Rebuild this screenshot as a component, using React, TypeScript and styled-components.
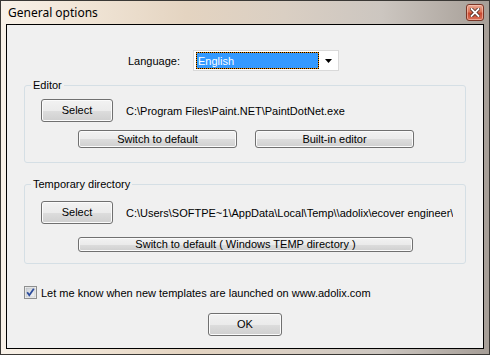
import React from "react";
import styled, { createGlobalStyle } from "styled-components";

const GlobalStyle = createGlobalStyle`
  html, body {
    margin: 0;
    padding: 0;
    background: #ffffff;
  }
  body {
    font-family: "Liberation Sans", Arial, sans-serif;
  }
`;

const Window = styled.div`
  box-sizing: border-box;
  width: 490px;
  height: 355px;
  border: 1px solid #3a3835;
  background: linear-gradient(to right, #f8f1e8 0%, #f0e4d5 18%, #e4d4c1 38%, #dacfc3 58%, #ccc6c0 78%, #a69e97 100%);
  padding: 0 5px 5px 5px;
  display: flex;
  flex-direction: column;
`;

const TitleBar = styled.div`
  height: 23px;
  display: flex;
  justify-content: space-between;
  align-items: flex-start;
`;

const Title = styled.span`
  padding: 4px 0 0 2px;
  font-family: "Noto Sans", "Open Sans", sans-serif;
  font-size: 12px;
  line-height: 16px;
  color: #000;
`;

const CloseButton = styled.div`
  box-sizing: border-box;
  width: 18px;
  height: 17px;
  margin: 3px 0 0 0;
  border: 1px solid #7a3526;
  border-radius: 3px;
  background: linear-gradient(to bottom, #eaa892 0%, #dc7458 45%, #c8472f 55%, #d9725a 100%);
  box-shadow: inset 0 0 0 1px rgba(255, 210, 195, 0.55);
  display: flex;
  align-items: center;
  justify-content: center;
`;

const Client = styled.div`
  flex: 1;
  border: 1px solid #000;
  background: #f0f0f0;
  display: flex;
  flex-direction: column;
  font-size: 11px;
  color: #000;
`;

const LanguageRow = styled.div`
  margin-top: 25px;
  padding-left: 121px;
  height: 21px;
  display: flex;
  align-items: center;
  gap: 13px;
`;

const Combo = styled.div`
  box-sizing: border-box;
  width: 146px;
  height: 21px;
  border: 1px solid #d9d9d9;
  background: #fff;
  padding: 1px 1px 1px 2px;
  display: flex;
  align-items: stretch;
`;

const ComboValue = styled.div`
  flex: 1;
  border: 1px dotted #000;
  background: linear-gradient(#3399ff, #3399ff) padding-box, #f08c00 border-box;
  color: #fff;
  line-height: 16px;
  padding-left: 1px;
`;

const ComboArrow = styled.div`
  width: 18px;
  display: flex;
  align-items: center;
  justify-content: center;
`;

const GroupBox = styled.div<{ $top: number; $bottom: number }>`
  margin: ${(p) => p.$top}px 17px 0 17px;
  padding-bottom: ${(p) => p.$bottom}px;
  border: 1px solid #d5dfe5;
  border-radius: 3px;
  display: flex;
  flex-direction: column;
`;

const Legend = styled.span`
  align-self: flex-start;
  margin: -7px 0 0 6px;
  padding: 0 2px;
  line-height: 13px;
  background: #f0f0f0;
`;

const Row = styled.div<{ $top: number; $left: number; $gap: number }>`
  margin-top: ${(p) => p.$top}px;
  padding-left: ${(p) => p.$left}px;
  display: flex;
  align-items: center;
  gap: ${(p) => p.$gap}px;
  white-space: nowrap;
`;

const Button = styled.button<{ $w: number; $h: number }>`
  box-sizing: border-box;
  width: ${(p) => p.$w}px;
  height: ${(p) => p.$h}px;
  flex: none;
  padding: 0;
  border: 1px solid #707070;
  border-radius: 3px;
  background: linear-gradient(to bottom, #f2f2f2 0%, #ebebeb 50%, #dddddd 51%, #cfcfcf 100%);
  box-shadow: inset 0 0 0 1px #fbfbfb;
  font-family: "Liberation Sans", Arial, sans-serif;
  font-size: 11px;
  color: #000;
  line-height: 1;
`;

const PathText = styled.span`
  overflow: hidden;
`;

const CheckRow = styled.label`
  margin-top: 22px;
  padding-left: 17px;
  height: 13px;
  display: flex;
  align-items: center;
  gap: 4px;
`;

const Footer = styled.div`
  margin-top: 14px;
  display: flex;
  justify-content: center;
`;

const CloseGlyph = () => (
  <svg width="10" height="9" viewBox="0 0 10 9">
    <path d="M1.5 1 L8.5 8 M8.5 1 L1.5 8" stroke="#4a2a22" strokeWidth="3.4" strokeLinecap="square" />
    <path d="M1.5 1 L8.5 8 M8.5 1 L1.5 8" stroke="#ffffff" strokeWidth="1.8" strokeLinecap="square" />
  </svg>
);

const CheckBox = () => (
  <svg width="13" height="13" viewBox="0 0 13 13">
    <defs>
      <linearGradient id="cb" x1="0" y1="0" x2="1" y2="1">
        <stop offset="0" stopColor="#cbcfd5" />
        <stop offset="1" stopColor="#f6f6f6" />
      </linearGradient>
    </defs>
    <rect x="0.5" y="0.5" width="12" height="12" fill="#f4f4f4" stroke="#8e8f8f" />
    <rect x="2" y="2" width="9" height="9" fill="url(#cb)" stroke="#aeb3b9" strokeWidth="0.5" />
    <path d="M3.2 6.2 L5.3 9.2 L9.8 2.8" fill="none" stroke="#2c4c9c" strokeWidth="1.8" />
  </svg>
);

const Arrow = () => (
  <svg width="7" height="4" viewBox="0 0 7 4">
    <path d="M0 0 H7 L3.5 4 Z" fill="#000" />
  </svg>
);

export default function App() {
  return (
    <>
      <GlobalStyle />
      <Window>
        <TitleBar>
          <Title>General options</Title>
          <CloseButton>
            <CloseGlyph />
          </CloseButton>
        </TitleBar>
        <Client>
          <LanguageRow>
            <span>Language:</span>
            <Combo>
              <ComboValue>English</ComboValue>
              <ComboArrow>
                <Arrow />
              </ComboArrow>
            </Combo>
          </LanguageRow>

          <GroupBox $top={14} $bottom={14}>
            <Legend>Editor</Legend>
            <Row $top={7} $left={16} $gap={13}>
              <Button $w={72} $h={23}>Select</Button>
              <PathText>C:\Program Files\Paint.NET\PaintDotNet.exe</PathText>
            </Row>
            <Row $top={8} $left={53} $gap={18}>
              <Button $w={159} $h={18}>Switch to default</Button>
              <Button $w={159} $h={18}>Built-in editor</Button>
            </Row>
          </GroupBox>

          <GroupBox $top={21} $bottom={11}>
            <Legend>Temporary directory</Legend>
            <Row $top={10} $left={16} $gap={13}>
              <Button $w={72} $h={23}>Select</Button>
              <PathText>C:\Users\SOFTPE~1\AppData\Local\Temp\\adolix\ecover engineer\</PathText>
            </Row>
            <Row $top={13} $left={53} $gap={0}>
              <Button $w={335} $h={15}>Switch to default ( Windows TEMP directory )</Button>
            </Row>
          </GroupBox>

          <CheckRow>
            <CheckBox />
            <span>Let me know when new templates are launched on www.adolix.com</span>
          </CheckRow>

          <Footer>
            <Button $w={74} $h={23}>OK</Button>
          </Footer>
        </Client>
      </Window>
    </>
  );
}
